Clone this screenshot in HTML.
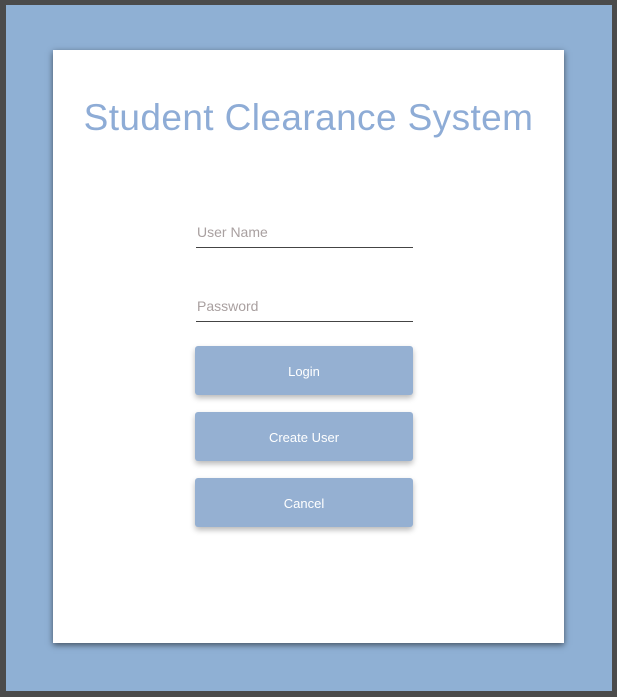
<!DOCTYPE html>
<html><head><style>
html,body{margin:0;padding:0}
body{width:617px;height:697px;background:#4b4b4b;position:relative;overflow:hidden;font-family:"Liberation Sans",sans-serif}
.bg{position:absolute;left:6px;top:5px;width:606px;height:686px;background:#8fb0d4}
.card{position:absolute;left:53px;top:50px;width:511px;height:593px;background:#fff;box-shadow:0 2px 6px rgba(0,0,0,.55)}
h1{position:absolute;left:0;width:511px;top:47px;margin:0;text-align:center;font-weight:normal;font-size:37px;color:#8eacd6;letter-spacing:.4px}
.field{position:absolute;left:196px;width:217px;border-bottom:1px solid #444;height:30px;font-size:14px;color:#a9a0a0;padding-left:1px;box-sizing:border-box}
.btn{position:absolute;left:195px;width:218px;height:49px;background:#95b0d2;border-radius:3px;color:#fff;font-size:13px;text-align:center;line-height:51px;box-shadow:0 3px 6px rgba(0,0,0,.28)}
</style></head><body>
<div class="bg"></div>
<div class="card">
<h1>Student Clearance System</h1>
</div>
<div class="field" style="top:218px;line-height:28px">User Name</div>
<div class="field" style="top:292px;line-height:28px">Password</div>
<div class="btn" style="top:346px">Login</div>
<div class="btn" style="top:412px">Create User</div>
<div class="btn" style="top:478px">Cancel</div>
</body></html>
